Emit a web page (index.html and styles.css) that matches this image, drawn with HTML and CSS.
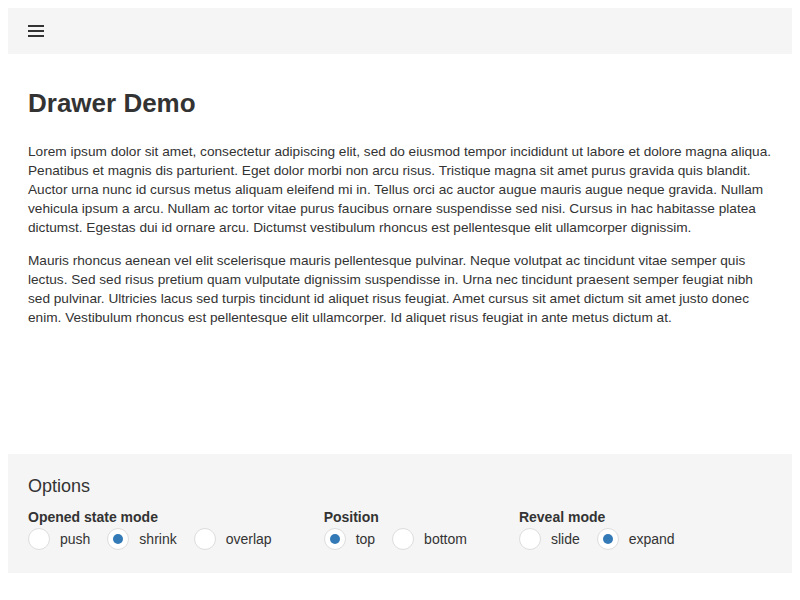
FILE: index.html
```html
<!DOCTYPE html>
<html>
<head>
<meta charset="utf-8">
<link rel="stylesheet" href="styles.css">
</head>
<body>
<header class="topbar">
  <button class="menu-btn" aria-label="menu">
    <svg width="16" height="12" viewBox="0 0 16 12"><rect x="0" y="0" width="16" height="2" fill="#333"/><rect x="0" y="5" width="16" height="2" fill="#333"/><rect x="0" y="10" width="16" height="2" fill="#333"/></svg>
  </button>
</header>
<main class="content">
  <h1 class="title">Drawer Demo</h1>
  <p>Lorem ipsum dolor sit amet, consectetur adipiscing elit, sed do eiusmod tempor incididunt ut labore et dolore magna aliqua. Penatibus et magnis dis parturient. Eget dolor morbi non arcu risus. Tristique magna sit amet purus gravida quis blandit. Auctor urna nunc id cursus metus aliquam eleifend mi in. Tellus orci ac auctor augue mauris augue neque gravida. Nullam vehicula ipsum a arcu. Nullam ac tortor vitae purus faucibus ornare suspendisse sed nisi. Cursus in hac habitasse platea dictumst. Egestas dui id ornare arcu. Dictumst vestibulum rhoncus est pellentesque elit ullamcorper dignissim.</p>
  <p>Mauris rhoncus aenean vel elit scelerisque mauris pellentesque pulvinar. Neque volutpat ac tincidunt vitae semper quis lectus. Sed sed risus pretium quam vulputate dignissim suspendisse in. Urna nec tincidunt praesent semper feugiat nibh sed pulvinar. Ultricies lacus sed turpis tincidunt id aliquet risus feugiat. Amet cursus sit amet dictum sit amet justo donec enim. Vestibulum rhoncus est pellentesque elit ullamcorper. Id aliquet risus feugiat in ante metus dictum at.</p>
</main>
<section class="options">
  <div class="options-title">Options</div>
  <div class="groups">
    <div class="group">
      <div class="group-label">Opened state mode</div>
      <div class="radios">
        <span class="radio"><span class="circle"></span>push</span>
        <span class="radio"><span class="circle on"></span>shrink</span>
        <span class="radio"><span class="circle"></span>overlap</span>
      </div>
    </div>
    <div class="group">
      <div class="group-label">Position</div>
      <div class="radios">
        <span class="radio"><span class="circle on"></span>top</span>
        <span class="radio"><span class="circle"></span>bottom</span>
      </div>
    </div>
    <div class="group">
      <div class="group-label">Reveal mode</div>
      <div class="radios">
        <span class="radio"><span class="circle"></span>slide</span>
        <span class="radio"><span class="circle on"></span>expand</span>
      </div>
    </div>
  </div>
</section>
</body>
</html>
```
FILE: styles.css
```css
body {
  margin: 8px;
  font-family: "Liberation Sans", Arial, sans-serif;
  color: #333;
  font-size: 14px;
  line-height: 19px;
}
.topbar {
  height: 46px;
  background: #f5f5f5;
  display: flex;
  align-items: center;
  padding-left: 20px;
}
.menu-btn {
  border: 0;
  background: none;
  padding: 0;
  width: 16px;
  height: 12px;
  display: block;
}
.menu-btn svg { display: block; }
.content {
  height: 400px;
  box-sizing: border-box;
  padding: 34px 20px 0;
}
.title {
  margin: 0 0 24px;
  font-size: 26px;
  line-height: 30px;
  font-weight: bold;
}
.content p {
  margin: 0 0 14px;
  font-size: 13.65px;
}
.options {
  background: #f5f5f5;
  padding: 20px 20px 23px;
}
.options-title {
  font-size: 18px;
  line-height: 24px;
  font-weight: 300;
  margin-bottom: 11px;
}
.groups {
  display: flex;
  gap: 52px;
}
.group-label {
  font-weight: bold;
  line-height: 17px;
  margin-bottom: 2px;
}
.radios {
  display: flex;
  gap: 17px;
}
.radio {
  display: flex;
  align-items: center;
  gap: 10px;
  line-height: 22px;
}
.circle {
  width: 20px;
  height: 20px;
  border: 1px solid #ddd;
  border-radius: 50%;
  background: #fff;
  display: flex;
  align-items: center;
  justify-content: center;
}
.circle.on::after {
  content: "";
  width: 10px;
  height: 10px;
  border-radius: 50%;
  background: #337ab7;
}
```
